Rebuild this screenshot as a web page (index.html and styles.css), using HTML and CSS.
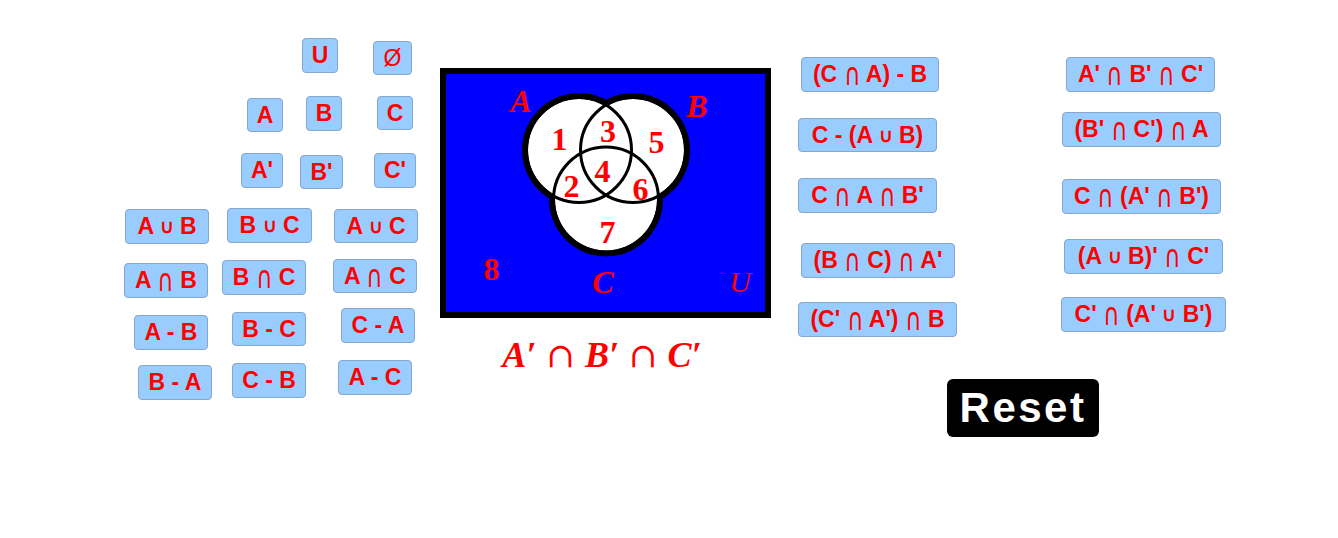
FILE: index.html
```html
<!DOCTYPE html>
<html lang="en">
<head>
<meta charset="utf-8">
<title>Venn diagram sets</title>
<link rel="stylesheet" href="styles.css">
</head>
<body>
<main class="stage">
  <button class="btn b-univ">U</button>
  <button class="btn b-empty">Ø</button>
  <button class="btn b-a">A</button>
  <button class="btn b-b">B</button>
  <button class="btn b-c">C</button>
  <button class="btn b-ap">A'</button>
  <button class="btn b-bp">B'</button>
  <button class="btn b-cp">C'</button>
  <button class="btn b-aub">A <span class="cup">∪</span> B</button>
  <button class="btn b-buc">B <span class="cup">∪</span> C</button>
  <button class="btn b-auc">A <span class="cup">∪</span> C</button>
  <button class="btn b-anb">A <span class="cap">∩</span> B</button>
  <button class="btn b-bnc">B <span class="cap">∩</span> C</button>
  <button class="btn b-anc">A <span class="cap">∩</span> C</button>
  <button class="btn b-amb">A - B</button>
  <button class="btn b-bmc">B - C</button>
  <button class="btn b-cma">C - A</button>
  <button class="btn b-bma">B - A</button>
  <button class="btn b-cmb">C - B</button>
  <button class="btn b-amc">A - C</button>

  <svg class="venn" viewBox="430 60 350 320" width="350" height="320" aria-label="Venn diagram">
    <rect x="443" y="71" width="325" height="244" fill="#0000ff" stroke="#000" stroke-width="6"/>
    <g fill="#000">
      <circle cx="579" cy="150" r="57"/>
      <circle cx="633" cy="150" r="57"/>
      <circle cx="606" cy="199.5" r="57"/>
    </g>
    <g fill="#fff">
      <circle cx="579" cy="150" r="51"/>
      <circle cx="633" cy="150" r="51"/>
      <circle cx="606" cy="199.5" r="51"/>
    </g>
    <g fill="none" stroke="#000" stroke-width="3">
      <circle cx="579" cy="150" r="52.5"/>
      <circle cx="633" cy="150" r="52.5"/>
      <circle cx="606" cy="199.5" r="52.5"/>
    </g>
    <g class="vlabel set">
      <text x="521" y="112">A</text>
      <text x="697" y="117">B</text>
      <text x="603" y="293">C</text>
    </g>
    <text class="vlabel univ" x="740" y="292">U</text>
    <g class="vlabel num">
      <text x="559.5" y="150">1</text>
      <text x="608" y="142">3</text>
      <text x="656.5" y="153">5</text>
      <text x="602.5" y="182">4</text>
      <text x="571.5" y="197">2</text>
      <text x="640.5" y="200">6</text>
      <text x="607.5" y="243">7</text>
      <text x="491.5" y="280">8</text>
    </g>
    <text class="vlabel formula" x="602" y="367">A′<tspan class="op" dx="10">∩</tspan><tspan dx="10">B′</tspan><tspan class="op" dx="10">∩</tspan><tspan dx="10">C′</tspan></text>
  </svg>

  <button class="btn b-r1">(C <span class="cap">∩</span> A) - B</button>
  <button class="btn b-r2">C - (A <span class="cup">∪</span> B)</button>
  <button class="btn b-r3">C <span class="cap">∩</span> A <span class="cap">∩</span> B'</button>
  <button class="btn b-r4">(B <span class="cap">∩</span> C) <span class="cap">∩</span> A'</button>
  <button class="btn b-r5">(C' <span class="cap">∩</span> A') <span class="cap">∩</span> B</button>

  <button class="btn b-s1">A' <span class="cap">∩</span> B' <span class="cap">∩</span> C'</button>
  <button class="btn b-s2">(B' <span class="cap">∩</span> C') <span class="cap">∩</span> A</button>
  <button class="btn b-s3">C <span class="cap">∩</span> (A' <span class="cap">∩</span> B')</button>
  <button class="btn b-s4">(A <span class="cup">∪</span> B)' <span class="cap">∩</span> C'</button>
  <button class="btn b-s5">C' <span class="cap">∩</span> (A' <span class="cup">∪</span> B')</button>

  <button class="reset">Reset</button>
</main>
</body>
</html>
```

FILE: styles.css
```css
html, body {
  margin: 0;
  padding: 0;
  background: #ffffff;
}

body {
  width: 1338px;
  height: 538px;
  overflow: hidden;
  font-family: "Liberation Sans", Arial, sans-serif;
}

.stage {
  position: relative;
  width: 1338px;
  height: 538px;
}

.btn {
  position: absolute;
  box-sizing: border-box;
  height: 35px;
  margin: 0;
  padding: 0;
  display: flex;
  align-items: center;
  justify-content: center;
  white-space: pre;
  background: #99ccff;
  border: 1px solid #86a6cb;
  border-radius: 4px;
  color: #ff0000;
  font-family: "Liberation Sans", Arial, sans-serif;
  font-weight: bold;
  font-size: 23px;
  line-height: 1;
}

.cup {
  font-size: 19px;
}

.cap {
  font-family: "DejaVu Sans", sans-serif;
  font-weight: normal;
  font-size: 31px;
  line-height: 1;
  display: inline-block;
  transform: scaleX(0.72);
  margin: 0 -3px;
}

.b-univ  { left: 302px; top: 38px;  width: 36px; }
.b-empty { left: 373px; top: 41px;  width: 39px; height: 34px; font-weight: normal; }
.b-a     { left: 247px; top: 98px;  width: 36px; height: 34px; }
.b-b     { left: 306px; top: 96px;  width: 36px; }
.b-c     { left: 377px; top: 96px;  width: 36px; height: 34px; }
.b-ap    { left: 241px; top: 153px; width: 42px; }
.b-bp    { left: 300px; top: 155px; width: 43px; height: 34px; }
.b-cp    { left: 374px; top: 153px; width: 42px; }

.b-aub   { left: 125px; top: 209px; width: 84px; }
.b-buc   { left: 227px; top: 208px; width: 85px; }
.b-auc   { left: 334px; top: 209px; width: 84px; height: 34px; }
.b-anb   { left: 124px; top: 263px; width: 84px; }
.b-bnc   { left: 222px; top: 260px; width: 84px; }
.b-anc   { left: 333px; top: 259px; width: 84px; height: 34px; }
.b-amb   { left: 134px; top: 315px; width: 74px; }
.b-bmc   { left: 232px; top: 312px; width: 74px; height: 34px; }
.b-cma   { left: 341px; top: 308px; width: 74px; }
.b-bma   { left: 138px; top: 365px; width: 74px; }
.b-cmb   { left: 232px; top: 363px; width: 74px; }
.b-amc   { left: 338px; top: 360px; width: 74px; }

.b-r1 { left: 801px; top: 57px;  width: 138px; }
.b-r2 { left: 798px; top: 118px; width: 139px; height: 34px; }
.b-r3 { left: 798px; top: 178px; width: 139px; }
.b-r4 { left: 801px; top: 243px; width: 154px; }
.b-r5 { left: 798px; top: 302px; width: 159px; }

.b-s1 { left: 1066px; top: 57px;  width: 149px; }
.b-s2 { left: 1062px; top: 112px; width: 159px; }
.b-s3 { left: 1062px; top: 179px; width: 159px; }
.b-s4 { left: 1064px; top: 239px; width: 159px; }
.b-s5 { left: 1061px; top: 297px; width: 165px; }

.venn {
  position: absolute;
  left: 430px;
  top: 60px;
  overflow: visible;
}

.vlabel {
  fill: #ff0000;
  font-family: "Liberation Serif", "Times New Roman", serif;
  font-weight: bold;
  font-size: 32px;
  text-anchor: middle;
}

.vlabel.set,
.vlabel.formula {
  font-style: italic;
}

.vlabel.formula {
  font-size: 36px;
}

.vlabel.univ {
  font-style: italic;
  font-weight: normal;
  font-size: 30px;
}

.vlabel .op {
  font-family: "DejaVu Serif", serif;
  font-style: normal;
  font-weight: normal;
  font-size: 34px;
}

.reset {
  position: absolute;
  left: 947px;
  top: 379px;
  width: 152px;
  height: 58px;
  margin: 0;
  padding: 0;
  box-sizing: border-box;
  background: #000000;
  border: none;
  border-radius: 6px;
  color: #ffffff;
  font-family: "Liberation Sans", Arial, sans-serif;
  font-weight: bold;
  font-size: 42px;
  letter-spacing: 2.5px;
  line-height: 1;
}
```
